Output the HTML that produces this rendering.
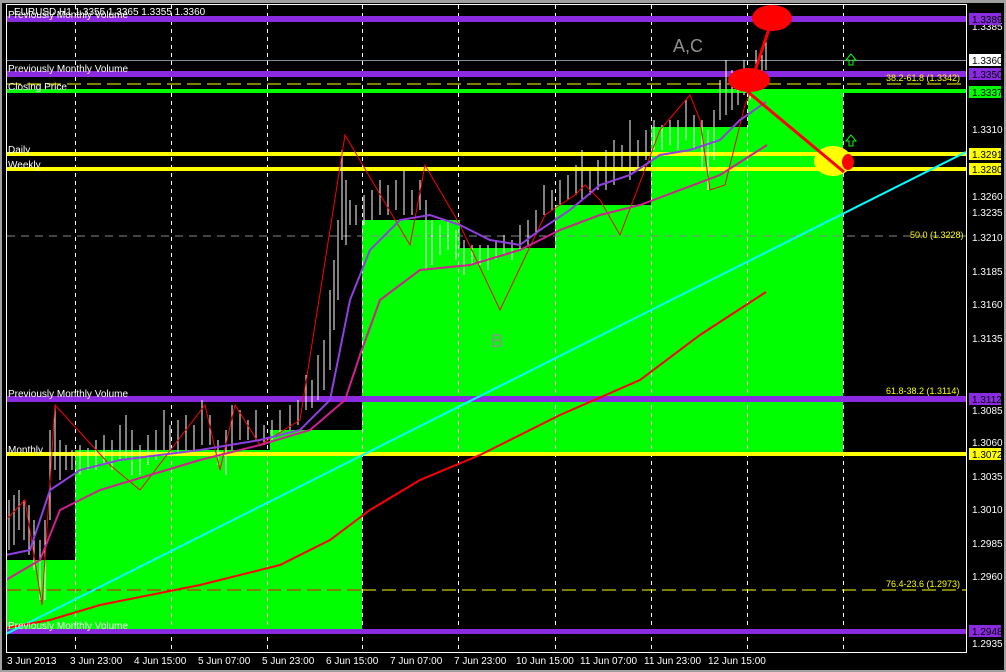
<!DOCTYPE html>
<html><head><meta charset="utf-8"><style>
html,body{margin:0;padding:0;background:#000;width:1006px;height:672px;overflow:hidden}
svg{display:block;font-family:"Liberation Sans",sans-serif}
</style></head><body>
<svg width="1006" height="672" viewBox="0 0 1006 672" xmlns="http://www.w3.org/2000/svg">
<rect x="0" y="0" width="1006" height="672" fill="#000"/>
<rect x="0" y="0" width="1006" height="3" fill="#a0a0a0"/>
<rect x="0" y="0" width="2" height="672" fill="#a0a0a0"/>
<rect x="1004" y="0" width="2" height="672" fill="#a0a0a0"/>
<rect x="0" y="670" width="1006" height="2" fill="#a0a0a0"/>
<g fill="#00ff00">
<rect x="7" y="560" width="68" height="70"/>
<rect x="75" y="450" width="195" height="180"/>
<rect x="270" y="430" width="92" height="200"/>
<rect x="362" y="220" width="98" height="233"/>
<rect x="460" y="248" width="95" height="205"/>
<rect x="555" y="205" width="96" height="248"/>
<rect x="651" y="127" width="97" height="326"/>
<rect x="748" y="90" width="95" height="363"/>
</g>
<g stroke="#fff" stroke-width="1" stroke-dasharray="4,4">
<line x1="75.5" y1="5" x2="75.5" y2="652"/><line x1="171.5" y1="5" x2="171.5" y2="652"/>
<line x1="267.5" y1="5" x2="267.5" y2="652"/><line x1="362.5" y1="5" x2="362.5" y2="652"/>
<line x1="458.5" y1="5" x2="458.5" y2="652"/><line x1="555.5" y1="5" x2="555.5" y2="652"/>
<line x1="651.5" y1="5" x2="651.5" y2="652"/><line x1="747.5" y1="5" x2="747.5" y2="652"/>
<line x1="843.5" y1="5" x2="843.5" y2="652"/>
</g>
<line x1="7" y1="84" x2="966" y2="84" stroke="#ff0" stroke-dasharray="14,6"/>
<line x1="7" y1="236" x2="966" y2="236" stroke="#888" stroke-dasharray="8,6"/>
<line x1="7" y1="590" x2="362" y2="590" stroke="#f00" stroke-dasharray="14,6"/>
<line x1="362" y1="590" x2="966" y2="590" stroke="#ff0" stroke-dasharray="14,6"/>
<line x1="7" y1="60.5" x2="966" y2="60.5" stroke="#8090a0"/>
<g>
<rect x="7" y="16" width="959" height="6" fill="#8a2be2"/>
<rect x="7" y="71" width="959" height="6" fill="#8a2be2"/>
<rect x="7" y="89" width="959" height="4" fill="#00ff00"/>
<rect x="7" y="152" width="959" height="4" fill="#ff0"/>
<rect x="7" y="167" width="959" height="4" fill="#ff0"/>
<rect x="7" y="396" width="959" height="6" fill="#8a2be2"/>
<rect x="7" y="452" width="959" height="4" fill="#ff0"/>
<rect x="7" y="629" width="959" height="5" fill="#8a2be2"/>
</g>
<line x1="6" y1="634" x2="966" y2="152" stroke="#00ffff" stroke-width="2"/>
<path fill="none" stroke="#fff" stroke-width="1" d="M9,500V550M14,495V545M19,490V530M24,500V540M29,505V555M34,520V570M40,540V600M45,520V600M50,430V520M55,405V470M60,440V480M66,445V470M72,450V470M80,445V475M88,448V470M96,440V470M104,435V465M112,440V470M120,425V460M126,415V460M132,430V475M140,445V475M148,435V465M156,430V460M164,410V450M170,425V455M178,420V455M186,415V450M194,425V450M202,400V445M210,415V445M218,440V465M226,430V475M232,405V450M240,410V440M248,420V440M256,410V440M264,425V445M272,420V440M280,410V432M290,405V430M298,400V425M306,375V410M312,380V408M318,355V400M324,340V390M330,290V370M334,260V330M338,220V300M342,150V240M346,180V245M350,200V225M356,205V225M364,195V225M372,190V220M380,180V215M388,185V215M396,180V210M404,170V215M412,190V215M420,180V210M426,200V270M432,220V265M440,225V255M448,220V250M456,230V260M464,240V275M472,245V265M480,245V265M488,245V270M496,240V260M504,235V255M512,240V260M520,225V250M528,220V245M536,210V235M544,185V215M552,190V210M560,180V205M568,175V200M576,165V195M582,150V200M590,170V195M598,160V190M606,150V190M614,140V185M622,145V170M630,120V180M638,140V170M646,130V160M654,120V150M662,125V150M670,120V145M678,120V150M686,100V140M694,115V150M702,120V170M708,130V190M714,110V160M720,80V120M726,60V115M732,70V110M738,75V105M744,60V95M750,70V100M756,50V90M762,55V80M766,40V70"/>
<polyline fill="none" stroke="#f00" stroke-width="1" points="6,520 25,500 42,605 55,405 110,465 140,490 205,405 220,470 235,405 260,445 300,420 345,135 410,245 425,165 460,225 500,310 545,215 575,195 585,185 600,200 620,235 660,130 690,95 700,120 710,190 725,185 745,105 760,70"/>
<polyline fill="none" stroke="#d02090" stroke-width="2" points="6,580 40,560 60,510 100,490 150,475 200,460 260,445 310,430 345,400 360,355 380,300 420,270 470,265 520,250 560,230 600,215 640,205 680,190 720,175 767,145"/>
<polyline fill="none" stroke="#9040e0" stroke-width="2" points="6,555 30,550 50,490 80,470 120,460 200,450 260,440 300,430 330,400 350,300 370,250 400,220 430,215 460,225 490,240 520,245 540,230 570,210 600,185 630,175 660,155 690,150 720,140 740,120 766,102"/>
<polyline fill="none" stroke="#f00" stroke-width="2" points="6,628 50,620 100,605 200,585 280,565 330,540 370,510 420,480 480,455 560,415 640,380 700,335 766,292"/>
<ellipse cx="772" cy="18" rx="20" ry="13" fill="#f00"/>
<ellipse cx="749" cy="80" rx="21" ry="12" fill="#f00"/>
<ellipse cx="833" cy="161" rx="19" ry="15" fill="#ff0"/>
<ellipse cx="848" cy="162" rx="6" ry="8" fill="#f00"/>
<polyline fill="none" stroke="#f00" stroke-width="3" points="770,26 748,92 844,172"/>
<g fill="none" stroke="#00ff00" stroke-width="1">
<path d="M851,54 l-5,6 h3 v5 h4 v-5 h3 z"/>
<path d="M851,135 l-5,6 h3 v5 h4 v-5 h3 z"/>
</g>
<text x="673" y="52" fill="#909090" font-size="18">A,C</text>
<text x="491" y="347" fill="#909090" font-size="18">B</text>
<g fill="#fff" font-size="10">
<text x="8" y="18">Previously Monthly Volume</text>
<text x="14" y="15">EURUSD,H1 1.3355 1.3365 1.3355 1.3360</text>
<text x="8" y="72">Previously Monthly Volume</text>
<text x="8" y="90">Closing Price</text>
<text x="8" y="153">Daily</text>
<text x="8" y="168">Weekly</text>
<text x="8" y="397">Previously Monthly Volume</text>
<text x="8" y="453">Monthly</text>
<text x="8" y="629">Previously Monthly Volume</text>
</g>
<g fill="#ff0" font-size="9">
<text x="886" y="81">38.2-61.8 (1.3342)</text>
<text x="910" y="238">50.0 (1.3228)</text>
<text x="886" y="394">61.8-38.2 (1.3114)</text>
<text x="886" y="587">76.4-23.6 (1.2973)</text>
</g>
<rect x="6.5" y="4.5" width="960" height="648" fill="none" stroke="#fff"/>
<g fill="#fff" font-size="10">
<text x="972" y="30">1.3385</text><text x="972" y="133">1.3310</text><text x="972" y="200">1.3260</text>
<text x="972" y="216">1.3235</text><text x="972" y="241">1.3210</text><text x="972" y="275">1.3185</text>
<text x="972" y="308">1.3160</text><text x="972" y="342">1.3135</text><text x="972" y="414">1.3085</text>
<text x="972" y="446">1.3060</text><text x="972" y="480">1.3035</text><text x="972" y="513">1.3010</text>
<text x="972" y="547">1.2985</text><text x="972" y="580">1.2960</text><text x="972" y="647">1.2935</text>
</g>
<g font-size="10">
<rect x="969" y="13" width="32" height="12" fill="#8a2be2"/><text x="972" y="23" fill="#000">1.3389</text>
<rect x="969" y="54" width="32" height="12" fill="#fff"/><text x="972" y="64" fill="#000">1.3360</text>
<rect x="969" y="68" width="32" height="12" fill="#8a2be2"/><text x="972" y="78" fill="#000">1.3350</text>
<rect x="969" y="86" width="32" height="12" fill="#00ff00"/><text x="972" y="96" fill="#000">1.3337</text>
<rect x="969" y="148" width="32" height="12" fill="#ff0"/><text x="972" y="158" fill="#000">1.3291</text>
<rect x="969" y="163" width="32" height="12" fill="#ff0"/><text x="972" y="173" fill="#000">1.3280</text>
<rect x="969" y="393" width="32" height="12" fill="#8a2be2"/><text x="972" y="403" fill="#000">1.3112</text>
<rect x="969" y="448" width="32" height="12" fill="#ff0"/><text x="972" y="458" fill="#000">1.3072</text>
<rect x="969" y="625" width="32" height="12" fill="#8a2be2"/><text x="972" y="635" fill="#000">1.2948</text>
</g>
<g fill="#fff" font-size="10">
<text x="7" y="664">3 Jun 2013</text><text x="70" y="664">3 Jun 23:00</text><text x="134" y="664">4 Jun 15:00</text>
<text x="198" y="664">5 Jun 07:00</text><text x="262" y="664">5 Jun 23:00</text><text x="326" y="664">6 Jun 15:00</text>
<text x="390" y="664">7 Jun 07:00</text><text x="454" y="664">7 Jun 23:00</text><text x="516" y="664">10 Jun 15:00</text>
<text x="580" y="664">11 Jun 07:00</text><text x="644" y="664">11 Jun 23:00</text><text x="708" y="664">12 Jun 15:00</text>
</g>
</svg>
</body></html>
